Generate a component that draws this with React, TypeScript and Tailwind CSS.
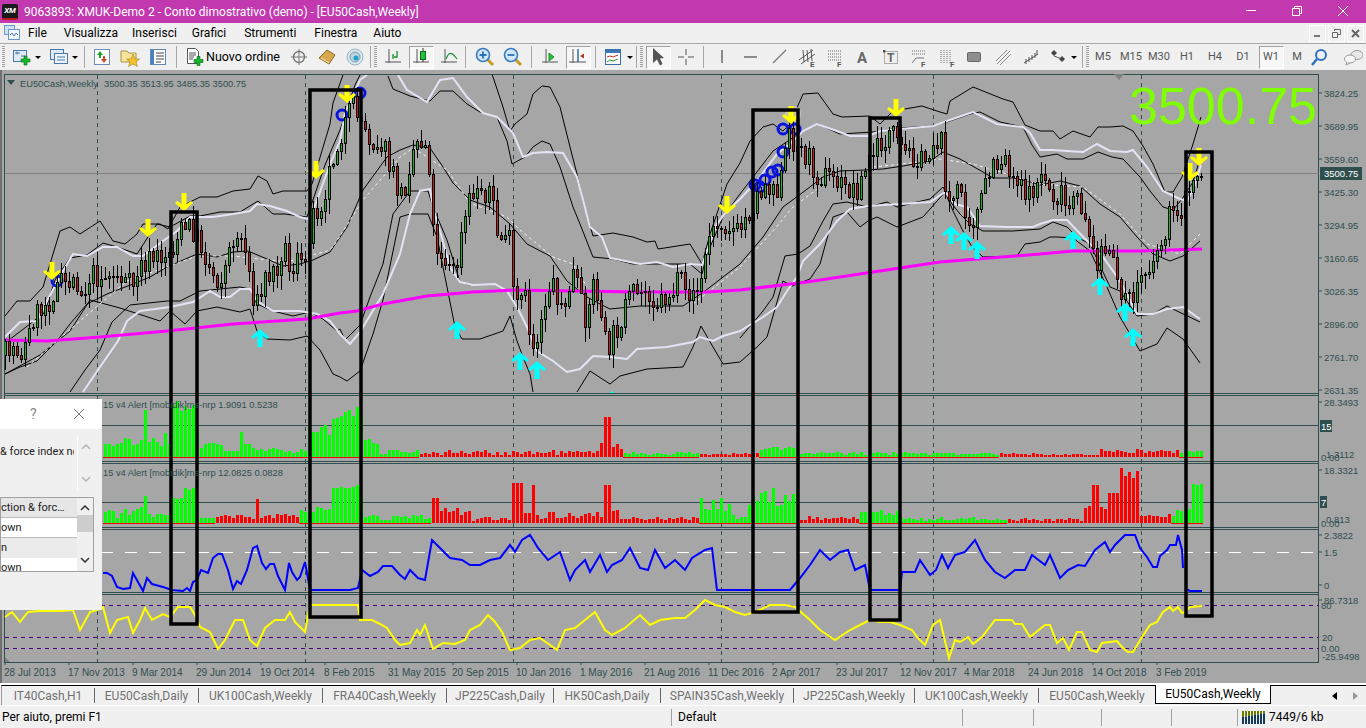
import React from 'react';

const SLATE = '#2f4f4f';

// ---- chart data, all in page pixels ----
const PRICE: number[][] = [[5,355],[17,345],[22,354],[30,340],[33,320],[50,300],[60,284],[80,280],[85,300],[90,274],[105,277],[118,274],[133,287],[142,267],[150,261],[163,256],[173,251],[182,231],[193,227],[202,244],[213,271],[220,281],[230,261],[233,237],[245,237],[248,257],[253,281],[257,307],[262,297],[267,277],[277,271],[285,241],[290,261],[293,274],[298,256],[305,274],[313,217],[325,197],[333,161],[345,127],[357,103],[365,127],[373,140],[385,143],[389,160],[397,183],[405,200],[409,170],[417,140],[428,143],[432,170],[433,220],[438,243],[447,260],[453,270],[457,274],[462,244],[469,207],[477,190],[485,190],[493,187],[497,227],[502,244],[505,231],[510,227],[513,274],[517,307],[522,300],[528,300],[533,350],[538,340],[545,307],[553,280],[562,300],[567,314],[573,274],[577,274],[582,304],[588,317],[593,290],[597,280],[602,314],[609,354],[613,340],[622,320],[627,307],[633,297],[642,294],[650,287],[657,304],[662,300],[673,294],[682,280],[687,297],[693,290],[702,290],[706,260],[710,237],[722,220],[730,224],[738,234],[745,224],[753,207],[762,190],[770,181],[782,187],[785,161],[790,141],[793,134],[798,147],[808,154],[822,177],[830,174],[845,187],[857,190],[865,177],[873,154],[883,145],[893,131],[898,147],[907,154],[917,154],[925,167],[930,151],[942,134],[945,167],[950,197],[953,204],[962,187],[967,204],[973,221],[982,207],[988,181],[998,164],[1009,154],[1013,177],[1022,174],[1030,201],[1037,184],[1045,174],[1057,201],[1062,194],[1069,214],[1077,201],[1089,214],[1093,254],[1097,260],[1105,247],[1113,264],[1121,281],[1129,304],[1133,304],[1137,287],[1145,274],[1153,259],[1162,247],[1165,234],[1169,221],[1177,204],[1182,214],[1189,194],[1193,187],[1197,174],[1201,173]];

const TOP_BLACK = '5,316 17,301 30,301 43,287 60,231 70,227 80,234 100,221 113,241 125,244 137,234 143,224 160,224 168,229 180,207 200,197 217,197 233,191 250,189 258,176 267,181 273,194 283,191 307,191 312,184 330,124 333,103 343,75';
const TOP_BLACK2 = '492,74 503,107 510,131 515,124 527,114 533,94 542,86 550,87 560,107 570,147 577,174 583,201 593,236 613,233 633,237 647,242 655,241 658,249 690,244 702,264 710,234 727,184 740,163 750,141 763,127 773,124 783,131 790,124 803,94 818,93 833,114 842,117 870,116 880,124 893,111 922,106 940,112 947,114 950,101 973,87 1003,99 1013,102 1025,125 1040,131 1053,131 1060,139 1073,131 1090,137 1098,127 1110,127 1123,126 1133,131 1143,146 1153,164 1165,192 1173,192 1182,177 1193,144 1201,117';
const WHITE_A = '5,337 20,322 37,321 47,301 63,271 73,254 87,256 103,247 117,247 133,256 143,256 163,241 177,231 190,217 213,217 233,214 250,211 257,204 270,206 287,211 300,217 308,219 313,211 330,164 340,141 345,113 360,80 367,75';
const WHITE_B = '398,75 407,90 427,102 440,80 453,78 467,97 483,113 497,117 513,133 523,157 533,153 547,152 563,153 577,177 590,227 602,237 610,258 630,262 640,264 657,262 673,267 690,264 702,265 707,251 717,224 727,211 740,199 757,181 777,154 790,144 803,131 817,124 837,131 850,136 868,136 880,131 900,129 933,126 947,121 973,112 997,124 1023,127 1030,133 1040,150 1053,150 1067,151 1083,152 1097,144 1110,151 1127,152 1133,150 1147,167 1163,191 1180,199 1187,201 1193,190 1201,165';
const BLACK_B = '5,343 30,324 45,312 55,280 70,258 87,255 103,243 117,247 137,254 148,237 157,224 170,227 190,216 200,216 220,212 240,212 258,201 273,214 285,214 307,217 325,165 340,130 355,85 360,75';
const BLACK_B2 = '388,76 393,89 410,96 430,101 440,91 453,91 467,104 480,112 497,117 507,141 512,164 525,157 533,147 542,141 550,144 560,167 573,207 580,224 593,257 613,259 633,264 655,264 690,264 702,274 707,254 723,217 740,194 773,151 803,131 818,124 840,134 873,132 900,128 930,126 947,122 970,114 980,112 1000,122 1023,127 1032,145 1040,157 1057,154 1067,159 1083,159 1098,152 1112,157 1123,159 1140,177 1150,191 1163,207 1173,210 1182,199 1193,182 1200,159';
const MIDDLE = '5,374 20,367 37,361 57,341 70,324 87,304 107,294 133,284 150,277 167,267 197,254 217,257 233,252 248,251 267,259 283,266 300,264 313,260 330,252 347,227 363,190 387,157 400,150 413,145 430,148 443,167 453,183 470,200 490,207 510,224 527,244 550,256 567,281 587,297 600,304 610,309 640,306 683,306 705,291 723,277 740,264 763,237 783,207 798,196 823,177 840,171 865,170 883,169 903,166 930,161 943,152 960,159 983,172 993,178 1013,178 1027,181 1040,185 1060,181 1080,186 1100,204 1120,217 1137,237 1153,254 1170,261 1183,256 1200,241';
const DOTTED = '27,367 80,321 127,281 197,256 233,256 287,262 327,251 333,247 363,200 400,157 413,148 447,170 470,203 507,217 520,230 553,257 573,264 587,287';
const DOTTED2 = '693,304 740,267 773,231 793,207 820,187';
const DOTTED3 = '873,167 903,164 940,159 973,164 1007,174 1037,184 1083,187 1120,214 1147,244 1180,254 1200,234';
const WHITE_C = '83,392 100,367 118,341 127,321 140,311 170,307 193,302 210,291 220,297 230,297 240,289 250,289 257,301 273,311 300,311 317,314 330,321 340,334 350,344 360,332 383,294 400,254 410,214 420,191 430,189 433,207 440,231 450,267 460,282 473,285 495,284 507,291 517,307 527,327 537,351 553,361 567,372 580,369 593,356 610,357 627,359 637,349 667,347 693,342 700,337 713,341 723,336 740,331 763,317 777,307 787,291 797,277 803,261 820,244 837,221 850,209 868,206 900,204 930,202 945,192 955,204 967,207 980,226 1007,227 1033,227 1040,224 1053,220 1067,220 1090,244 1103,257 1120,281 1137,314 1153,314 1167,309 1183,307 1200,319';
const BLACK_C = '70,392 85,370 100,350 112,322 130,305 167,301 180,301 200,291 240,287 250,289 257,304 273,311 293,316 310,312 323,319 337,331 340,329 345,340 360,325 370,297 383,264 393,214 410,191 428,191 433,207 447,240 460,282 470,285';
const BLACK_C2 = '740,338 763,311 773,297 785,256 798,254 810,246 823,221 833,204 847,202 868,207 887,202 897,207 917,202 930,199 943,187 952,204 960,214 970,224 983,231 1013,231 1040,229 1053,222 1067,227 1077,237 1090,244 1110,287 1120,291 1137,316 1153,314 1167,306 1177,311 1200,322';
const BLACK_D = '5,374 40,355 70,331 90,300 120,308 160,321 170,311 185,324 197,311 217,307 240,312 250,309 257,331 267,339 290,340 307,336 320,350 333,374 340,377 347,381 360,371 373,334 383,300 400,217 410,214 428,214 437,237 447,287 455,327 462,339 480,339 503,331 510,316 517,341 523,357 530,374 533,392';
const BLACK_D2 = '577,392 590,371 610,384 620,376 647,369 683,367 693,347 701,326 713,347 723,364 740,362 757,347 767,337 783,281 792,286 810,279 820,264 833,217 847,212 860,227 868,221 877,217 897,227 923,217 945,192 953,211 963,231 972,247 983,257 1017,256 1025,244 1040,242 1050,237 1057,237 1073,238 1090,251 1107,287 1120,317 1140,351 1157,344 1167,328 1183,339 1200,363';
const PINK = '5,340 47,341 100,337 167,331 233,324 307,319 340,313 357,311 383,304 427,296 473,292 513,290 573,291 640,292 707,292 740,290 807,282 873,272 940,262 1040,254 1073,251 1140,251 1202,249';
const BLUE_LINE = '103,573 107,573 112,576 117,587 123,589 130,588 133,573 138,582 143,591 147,578 152,584 163,587 172,590 183,591 187,588 190,591 193,582 197,580 201,570 208,573 213,558 218,554 222,554 228,570 233,589 237,581 241,584 247,570 253,548 257,546 262,563 266,569 270,564 274,564 278,576 285,590 289,563 292,572 297,580 300,577 305,562 310,590 350,590 358,588 362,570 370,576 378,572 383,566 392,566 400,575 405,579 410,570 418,578 425,580 432,540 440,548 450,558 462,560 470,565 480,565 490,560 500,558 510,545 515,552 522,540 530,535 538,548 548,560 560,552 570,580 575,570 585,560 590,572 600,555 607,572 612,565 622,560 630,548 640,568 648,570 655,550 665,568 675,560 685,570 692,558 705,550 712,548 717,590 750,590 790,590 800,578 810,565 820,550 830,560 840,552 848,550 855,570 865,565 870,590 900,590 902,572 915,572 920,560 930,575 936,570 942,555 948,568 955,555 965,552 975,540 985,560 995,572 1005,578 1015,570 1025,570 1032,555 1045,565 1050,555 1060,578 1068,570 1078,565 1085,566 1095,550 1105,542 1110,552 1115,545 1125,535 1135,535 1140,548 1147,557 1153,567 1157,567 1160,556 1167,550 1170,545 1176,545 1178,535 1182,550 1183,568';
const BLUE_TAIL = '1186,589 1190,591 1202,591';
const YELLOW_LINE = '5,617 12,612 20,622 28,612 40,611 62,611 73,610 80,630 90,612 97,610 103,607 110,633 117,620 128,617 133,633 140,620 145,608 152,620 163,614 170,617 178,607 190,607 195,615 200,627 210,632 218,649 225,640 235,620 243,620 250,640 257,646 265,628 275,620 285,620 290,612 295,622 305,632 310,605 358,605 360,620 372,620 380,624 387,628 395,640 400,645 410,643 417,630 420,635 425,625 433,649 443,643 455,644 465,640 470,630 480,625 488,615 495,622 502,632 510,650 520,648 530,640 540,638 550,645 557,650 565,630 575,628 585,620 595,612 605,630 612,635 625,628 640,615 650,625 660,620 675,618 685,618 695,610 705,600 715,605 725,607 735,612 745,615 755,612 770,605 785,605 795,607 810,620 820,630 835,640 850,630 860,625 870,620 880,622 890,622 900,625 912,630 918,638 925,645 933,625 940,620 949,658 955,640 960,642 968,637 973,644 982,637 995,620 1012,620 1015,624 1022,624 1030,637 1035,633 1045,625 1050,625 1057,643 1063,638 1069,650 1077,632 1082,632 1090,650 1097,652 1102,643 1110,642 1117,641 1122,647 1128,652 1133,652 1142,637 1150,625 1157,622 1163,612 1170,607 1173,611 1178,607 1182,613 1185,612 1190,607 1202,606';

const BOXES = [[171,197,212,624],[310,361,90,617],[753,798,110,612],[870,900,118,620],[1186,1212,152,616]];
const VGRID = [97,305,513,721,933,1141];
const YELLOW_ARROWS = [[52,280],[148,237],[184,211],[316,179],[347,103],[727,214],[791,124],[896,117],[1190,181],[1199,166]];
const CYAN_ARROWS = [[260,329],[457,321],[520,352],[537,361],[612,391],[951,226],[964,232],[977,241],[1073,231],[1100,277],[1125,303],[1133,328]];
const RINGS = [[57,281],[342,115],[360,93],[783,129],[795,129],[783,152],[755,185],[760,187],[765,180],[772,172],[778,170]];

const AXIS = [['3824.25',97],['3689.95',130],['3559.60',163],['3425.30',196],['3294.95',229],['3160.65',262],['3026.35',295],['2896.00',328],['2761.70',361],['2631.35',394],['28.3493',406],['18.3321',474],['2.3822',539],['1.5',556],['0',589],['86.7318',604]] as [string, number][];
const DATES = ['28 Jul 2013','17 Nov 2013','9 Mar 2014','29 Jun 2014','19 Oct 2014','8 Feb 2015','31 May 2015','20 Sep 2015','10 Jan 2016','1 May 2016','21 Aug 2016','11 Dec 2016','2 Apr 2017','23 Jul 2017','12 Nov 2017','4 Mar 2018','24 Jun 2018','14 Oct 2018','3 Feb 2019'];

const rng = (seed: number) => () => {
  seed = (seed + 0x6d2b79f5) | 0;
  let t = Math.imul(seed ^ (seed >>> 15), 1 | seed);
  t = (t + Math.imul(t ^ (t >>> 7), 61 | t)) ^ t;
  return ((t ^ (t >>> 14)) >>> 0) / 4294967296;
};

const priceAt = (x: number) => {
  for (let i = 1; i < PRICE.length; i++) {
    if (x <= PRICE[i][0]) {
      const [x0, y0] = PRICE[i - 1];
      const [x1, y1] = PRICE[i];
      return y0 + ((y1 - y0) * (x - x0)) / (x1 - x0);
    }
  }
  return 173;
};

function Candles() {
  const r = rng(7);
  let prev = priceAt(5);
  const out = [];
  for (let x = 5; x <= 1201; x += 4) {
    const c = Math.round(priceAt(x + 2) + (r() - 0.5) * 26);
    const o = Math.round(prev);
    prev = c;
    const top = Math.min(o, c);
    const bot = Math.max(o, c);
    const hi = top - Math.round(r() * 12) - 1;
    const lo = bot + Math.round(r() * 14) + 1;
    out.push(
      <g key={x}>
        <line x1={x + 0.5} x2={x + 0.5} y1={hi} y2={lo} stroke="#000" />
        <rect x={x - 0.5} y={top + 0.5} width={2} height={Math.max(bot - top, 1)} fill={c < o ? '#10c010' : '#d01818'} stroke="#000" />
      </g>,
    );
  }
  return <g shapeRendering="crispEdges">{out}</g>;
}

// [from x, to x, min height, max height, colour]
type Seg = [number, number, number, number, 'g' | 'r'];
const BARS1: Seg[] = [[100,142,8,20,'g'],[143,147,47,47,'g'],[148,172,10,25,'g'],[173,194,45,58,'g'],[195,198,27,27,'g'],[199,222,8,15,'g'],[223,238,5,8,'g'],[239,243,25,25,'g'],[244,252,10,17,'g'],[253,308,4,9,'g'],[309,330,22,34,'g'],[331,362,38,50,'g'],[363,380,12,18,'g'],[381,420,3,8,'g'],[421,600,2,7,'r'],[601,604,14,14,'r'],[605,609,40,40,'r'],[610,622,8,15,'r'],[623,700,2,5,'g'],[701,760,2,4,'r'],[761,800,6,11,'g'],[801,1000,2,5,'g'],[1001,1100,2,4,'r'],[1101,1180,3,8,'r'],[1181,1204,4,6,'g']];
const BARS2: Seg[] = [[100,142,5,16,'g'],[143,147,27,27,'g'],[148,172,5,10,'g'],[173,181,24,28,'g'],[182,194,32,36,'g'],[195,198,20,20,'g'],[199,214,3,6,'g'],[215,254,3,9,'r'],[255,259,24,24,'r'],[260,300,4,9,'r'],[301,330,10,20,'g'],[331,362,25,38,'g'],[363,430,3,8,'g'],[431,437,25,25,'r'],[438,470,8,16,'r'],[471,512,2,6,'r'],[513,524,40,40,'r'],[525,529,10,10,'r'],[530,534,38,38,'r'],[535,604,4,11,'r'],[605,609,38,38,'r'],[610,618,10,16,'r'],[619,700,3,6,'r'],[701,732,12,25,'g'],[733,748,4,8,'g'],[749,800,14,36,'g'],[801,858,3,7,'r'],[859,900,6,15,'g'],[901,1005,2,6,'g'],[1006,1082,2,5,'r'],[1083,1091,10,20,'r'],[1092,1098,38,38,'r'],[1099,1108,8,16,'r'],[1109,1117,30,30,'r'],[1118,1137,45,56,'r'],[1138,1172,4,9,'r'],[1173,1190,6,14,'g'],[1191,1204,38,40,'g']];

function Bars({ segs, base, seed }: { segs: Seg[]; base: number; seed: number }) {
  const r = rng(seed);
  const out = [];
  for (let x = 105; x <= 1203; x += 4) {
    const s = segs.find((g) => x >= g[0] && x <= g[1]);
    if (!s) continue;
    const h = Math.round(s[2] + r() * (s[3] - s[2]));
    const fill = s[4] === 'g' ? '#00ff00' : '#ff0000';
    out.push(<rect key={x} x={x - 1} y={base - h} width={3} height={h} fill={fill} />);
    if (s[4] === 'g') out.push(<rect key={'u' + x} x={x - 2} y={base} width={4} height={1} fill="#ff0000" />);
  }
  return <g shapeRendering="crispEdges">{out}</g>;
}

const Down = ({ x, y }: { x: number; y: number }) => (
  <polygon transform={`translate(${x} ${y})`} fill="#ffff00" points="-2.5,-18 2.5,-18 2.5,-7 7,-10 9,-8 0,0 -9,-8 -7,-10 -2.5,-7" />
);
const Up = ({ x, y }: { x: number; y: number }) => (
  <polygon transform={`translate(${x} ${y})`} fill="#00ffff" points="-2.5,18 2.5,18 2.5,7 7,10 9,8 0,0 -9,8 -7,10 -2.5,7" />
);

function ChartDrawing() {
  return (
    <svg viewBox="0 70 1366 613" className="absolute inset-0 w-[1366px] h-[613px] font-['Liberation_Sans',sans-serif]">
      <defs>
        <clipPath id="mainWindow"><rect x="5" y="75" width="1314" height="318" /></clipPath>
      </defs>
      {/* frame and separators */}
      <rect x="4.5" y="74.5" width="1314" height="588" fill="none" stroke={SLATE} />
      {[393.5,395.5,461.5,463.5,527.5,529.5,592.5,594.5].map((y) => (
        <line key={y} x1="5" x2="1319" y1={y} y2={y} stroke={SLATE} />
      ))}
      <line x1="1" x2="1" y1="70" y2="683" stroke="#6f6f6f" strokeWidth="2" />
      {VGRID.map((x) => (
        <line key={x} x1={x + 0.5} x2={x + 0.5} y1="75" y2="662" stroke={SLATE} strokeDasharray="4 4" />
      ))}
      <line x1="5" x2="1319" y1="173.5" y2="173.5" stroke="#808080" />
      <line x1="5" x2="1319" y1="425.5" y2="425.5" stroke={SLATE} />
      <line x1="5" x2="1319" y1="502.5" y2="502.5" stroke={SLATE} />
      <line x1="5" x2="1319" y1="552.5" y2="552.5" stroke="#fff" strokeDasharray="12 12" />
      {[605.5,637.5,648.5].map((y) => (
        <line key={y} x1="5" x2="1319" y1={y} y2={y} stroke="#4b0082" strokeDasharray="4 4" />
      ))}

      <g clipPath="url(#mainWindow)">
        {/* bollinger bands behind candles */}
        <g fill="none" stroke="#000" strokeWidth="1">
          {[TOP_BLACK, TOP_BLACK2, BLACK_B, BLACK_B2, MIDDLE, BLACK_C, BLACK_C2, BLACK_D, BLACK_D2].map((p) => (
            <polyline key={p.slice(0, 12)} points={p} />
          ))}
        </g>
        <g fill="none" stroke="#e3e3f5" strokeWidth="2">
          {[WHITE_A, WHITE_B, WHITE_C].map((p) => (
            <polyline key={p.slice(0, 12)} points={p} />
          ))}
        </g>
        <g fill="none" stroke="#f2f2f2" strokeDasharray="3 3">
          {[DOTTED, DOTTED2, DOTTED3].map((p) => (
            <polyline key={p.slice(0, 12)} points={p} />
          ))}
        </g>
        <polyline points={PINK} fill="none" stroke="#ff00ff" strokeWidth="3" />
        {RINGS.map(([x, y]) => (
          <circle key={x + '-' + y} cx={x} cy={y} r="5" fill="none" stroke="#0a14e0" strokeWidth="3" />
        ))}
        <circle cx="793" cy="114" r="8" fill="#c9c3b4" />
        <Candles />
        {YELLOW_ARROWS.map(([x, y]) => <Down key={x} x={x} y={y} />)}
        {CYAN_ARROWS.map(([x, y]) => <Up key={x} x={x} y={y} />)}
      </g>

      {/* indicator windows */}
      <Bars segs={BARS1} base={457} seed={21} />
      <Bars segs={BARS2} base={523} seed={33} />
      <polyline points={BLUE_LINE} fill="none" stroke="#0000ff" strokeWidth="2" />
      <polyline points={BLUE_TAIL} fill="none" stroke="#0000ff" strokeWidth="2" />
      <polyline points={YELLOW_LINE} fill="none" stroke="#ffff00" strokeWidth="2" />

      {/* hand drawn boxes from the screenshot */}
      {BOXES.map(([l, r, t, b]) => (
        <rect key={l} x={l} y={t} width={r - l} height={b - t} fill="none" stroke="#000" strokeWidth="3.5" />
      ))}

      {/* labels */}
      <polygon points="7,80 15,80 11,85" fill={SLATE} />
      <polygon points="1114,74 1124,74 1119,80" fill="#808080" />
      <polygon points="5,657 5,662 10,662" fill="#808080" />
      <text x="20" y="87" className="text-[9.3px]" fill={SLATE}>EU50Cash,Weekly</text>
      <text x="104" y="87" className="text-[9.3px]" fill={SLATE}>3500.35 3513.95 3485.35 3500.75</text>
      <text x="103" y="408" className="text-[9.3px]" fill={SLATE}>15 v4 Alert [mobidik]ms-nrp 1.9091 0.5238</text>
      <text x="103" y="476" className="text-[9.3px]" fill={SLATE}>15 v4 Alert [mobidik]ms-nrp 12.0825 0.0828</text>
      <text x="1129" y="124" fill="#7fff00" className="text-[52px]">3500.75</text>

      {AXIS.map(([t, y]) => (
        <g key={t}>
          <line x1="1319" x2="1322" y1={y - 4} y2={y - 4} stroke={SLATE} />
          <text x="1324" y={y} className="text-[9.5px]" fill={SLATE}>{t}</text>
        </g>
      ))}
      <text x="1321" y="461" className="text-[9.5px]" fill={SLATE}>0.00</text>
      <text x="1326" y="458" className="text-[9.5px]" fill={SLATE}>1.3112</text>
      <text x="1321" y="527" className="text-[9.5px]" fill={SLATE}>0.00</text>
      <text x="1326" y="523" className="text-[9.5px]" fill={SLATE}>0.813</text>
      <text x="1321" y="609" className="text-[9.5px]" fill={SLATE}>80</text>
      <text x="1322" y="641" className="text-[9.5px]" fill={SLATE}>20</text>
      <text x="1321" y="652" className="text-[9.5px]" fill={SLATE}>0.00</text>
      <text x="1322" y="660" className="text-[9.5px]" fill={SLATE}>-25.9498</text>
      <rect x="1320" y="167" width="42" height="13" fill={SLATE} />
      <text x="1324" y="177" className="text-[9.5px]" fill="#fff">3500.75</text>
      <rect x="1320" y="420" width="12" height="12" fill={SLATE} />
      <text x="1321" y="430" className="text-[9.5px]" fill="#fff">15</text>
      <rect x="1320" y="496" width="7" height="12" fill={SLATE} />
      <text x="1321" y="506" className="text-[9.5px]" fill="#fff">7</text>

      {DATES.map((d, i) => (
        <g key={d}>
          <line x1={5 + 64 * i} x2={5 + 64 * i} y1="662" y2="665" stroke={SLATE} />
          <text x={4 + 64 * i} y="676" className="text-[10px]" fill={SLATE}>{d}</text>
        </g>
      ))}
    </svg>
  );
}

// ---- toolbar icons ----
const Ico = ({ children, w = 20 }: { children: React.ReactNode; w?: number }) => (
  <svg width={w} height="20" viewBox={`0 0 ${w} 20`} className="shrink-0">{children}</svg>
);
const Plus = ({ x, y }: { x: number; y: number }) => (
  <path transform={`translate(${x} ${y})`} d="M3 0h3v3h3v3H6v3H3V6H0V3h3z" fill="#12b82a" stroke="#0a6a18" strokeWidth="0.6" />
);
const Axes = () => <path d="M6 2v14M2 15h16" stroke="#555" fill="none" />;

const icons: Record<string, React.ReactNode> = {
  newChart: <><rect x="1.5" y="3.5" width="13" height="11" fill="#dfeaf7" stroke="#4a78ad" /><path d="M3 6h5M5 4.5v3M9 9h4" stroke="#4a78ad" /><Plus x={9} y={9} /></>,
  profiles: <><rect x="1.5" y="2.5" width="13" height="10" fill="#dfeaf7" stroke="#4a78ad" /><rect x="5.5" y="6.5" width="13" height="10" fill="#eef4fb" stroke="#4a78ad" /><path d="M8 10h8M8 13h8" stroke="#4a78ad" /></>,
  market: <><rect x="2.5" y="2.5" width="15" height="15" fill="#fff" stroke="#6b8fb8" /><path d="M8 4l3 4H9v3H7V8H5z" fill="#1aa52a" /><path d="M12 16l-3-4h2V9h2v3h2z" fill="#d8452a" /></>,
  nav: <><path d="M1 4h6l2 2h7v9H1z" fill="#f7e39a" stroke="#a89448" /><polygon points="13,7 15,12 19.5,12 16,15 17.5,19.5 13,17 8.5,19.5 10,15 6.5,12 11,12" fill="#f2c230" stroke="#a5801a" strokeWidth="0.6" /></>,
  term: <><rect x="2.5" y="2.5" width="15" height="15" fill="#fff" stroke="#5b86b5" /><rect x="3" y="3" width="3" height="14" fill="#4a7fc0" /><path d="M8 6h8M8 9h8M8 12h8M8 15h5" stroke="#444" /></>,
  order: <><path d="M2.5 1.5h8l3 3v12h-11z" fill="#fff" stroke="#555" /><path d="M4 6h7M4 8h7M4 10h5M4 12h4" stroke="#555" /><Plus x={9} y={9.5} /></>,
  target: <><circle cx="10" cy="10" r="5.5" fill="none" stroke="#777" strokeWidth="1.4" /><path d="M10 2v16M2 10h16" stroke="#777" /></>,
  book: <><polygon points="2,11 10,3 18,8 12,17" fill="#d9a94e" stroke="#8a6420" /><path d="M4 11l8 5" stroke="#fff2c8" /></>,
  radio: <><circle cx="10" cy="10" r="8" fill="#d8e6ee" stroke="#9db5c4" /><circle cx="10" cy="10" r="5" fill="#bcd3df" stroke="#7fa0b4" /><circle cx="11" cy="11" r="2.5" fill="#1fa0c8" /></>,
  bars: <><Axes /><path d="M10 12V8h1M14 4v6h-3" stroke="#17902a" fill="none" strokeWidth="1.3" /></>,
  candle: <><Axes /><path d="M12 1v14" stroke="#333" /><rect x="9.5" y="4.5" width="5" height="8" fill="#27c23a" stroke="#0e6a1c" /></>,
  line: <><Axes /><path d="M7 12c3-8 6-7 11 0" stroke="#17902a" fill="none" strokeWidth="1.2" /></>,
  zoomIn: <><path d="M12 12l6 6" stroke="#c79a21" strokeWidth="3" /><circle cx="8" cy="8" r="6.5" fill="#cfe6fb" stroke="#3c7dc0" strokeWidth="1.6" /><path d="M4.5 8h7M8 4.5v7" stroke="#2c6fb5" strokeWidth="1.8" /></>,
  zoomOut: <><path d="M12 12l6 6" stroke="#c79a21" strokeWidth="3" /><circle cx="8" cy="8" r="6.5" fill="#cfe6fb" stroke="#3c7dc0" strokeWidth="1.6" /><path d="M4.5 8h7" stroke="#2c6fb5" strokeWidth="1.8" /></>,
  scroll: <><Axes /><polygon points="9,6 14,10 9,14" fill="#27c23a" stroke="#17902a" /></>,
  shift: <><path d="M5 2v14M1 15h17" stroke="#555" /><path d="M10 2v13" stroke="#2a6db0" strokeWidth="1.5" /><polygon points="12,9 16,6.5 16,11.5" fill="#b5381c" /></>,
  template: <><rect x="1.5" y="2.5" width="15" height="15" fill="#fff" stroke="#3a6ea5" /><rect x="2" y="3" width="14" height="3" fill="#3a78b8" /><path d="M3 10l3-1 3 1 5-2" stroke="#b5381c" fill="none" /><path d="M3 15l3-2 3 1 5-2" stroke="#2a9a30" fill="none" /></>,
  cursor: <polygon points="5,1 5,16 9,12.5 12,18.5 14.5,17 12,11.5 16,11" fill="#555" />,
  cross: <path d="M10 2v6M10 12v6M2 10h6M12 10h6" stroke="#555" />,
  vline: <path d="M10 3v13" stroke="#555" strokeWidth="1.3" />,
  hline: <path d="M3 10h13" stroke="#555" strokeWidth="1.3" />,
  trend: <path d="M4 16L17 3" stroke="#777" strokeWidth="1.3" />,
  channel: <><path d="M2 13L16 3M4 17L18 7M6 3l1 12M10 3l1 12M14 2l1 12" stroke="#555" fill="none" /><text x="13" y="19.5" className="text-[8px] font-bold" fill="#555">E</text></>,
  fiboH: <><path d="M3 4h13M3 7h13M3 10h13M3 13h13" stroke="#666" strokeDasharray="1 1" /><text x="12" y="19.5" className="text-[8px] font-bold" fill="#555">F</text></>,
  textA: <text x="4" y="16" className="text-[15px] font-bold" fill="#666">A</text>,
  label: <><rect x="3.5" y="4.5" width="13" height="12" fill="none" stroke="#666" strokeDasharray="1 1" /><rect x="2" y="3" width="2.5" height="2.5" fill="#555" /><text x="6" y="15" className="text-[12px] font-bold" fill="#666">T</text></>,
  fiboArc: <><path d="M3 4h14M3 7h14" stroke="#666" strokeDasharray="1 1" /><path d="M3 16l4-5 8 0" stroke="#777" fill="none" /><text x="12" y="19.5" className="text-[8px] font-bold" fill="#555">F</text></>,
  fiboV: <><path d="M4 3v13M7 3v13M10 3v13M13 3v13" stroke="#666" strokeDasharray="1 1" /><text x="13" y="19.5" className="text-[8px] font-bold" fill="#555">F</text></>,
  rect: <rect x="2.5" y="5.5" width="13" height="9" rx="1" fill="#8e8e8e" stroke="#666" />,
  lines: <path d="M3 14L14 3M4 17L17 4M7 18L18 7" stroke="#888" fill="none" />,
  gitter: <path d="M3 16l14-9M5 12v5M8 10v5M11 8v5M14 6v5M16 3v5" stroke="#555" fill="none" />,
  arrows: <><polygon points="6,3 9,6 6,9 3,6" fill="#444" /><polygon points="11,12 14,9 17,12 14,15" fill="#444" /><path d="M6 9l8 3" stroke="#555" /></>,
  search: <><circle cx="12" cy="8" r="5" fill="none" stroke="#2f6fc4" strokeWidth="2" /><path d="M8 12l-5 6" stroke="#2f6fc4" strokeWidth="2.5" /></>,
  chat: <><ellipse cx="14" cy="8" rx="6" ry="4.5" fill="#e8e8e8" stroke="#9a9a9a" /><ellipse cx="7" cy="12" rx="5.5" ry="4" fill="#f7f7f7" stroke="#9a9a9a" /><path d="M4 15l-1 3 4-2" fill="#f7f7f7" stroke="#9a9a9a" /></>,
};

const Drop = () => <span className="ml-[3px] w-0 h-0 border-x-[3px] border-x-transparent border-t-[3px] border-t-black shrink-0" />;

function Btn({ name, active, drop, className }: { name: string; active?: boolean; drop?: boolean; className?: string }) {
  const base = 'h-[24px] flex items-center justify-center shrink-0 ' + (className ?? 'w-[28px]');
  return (
    <div className={base}>
      {active ? (
        <div className="w-[25px] h-[23px] flex items-center justify-center border border-t-[#a0a0a0] border-l-[#a0a0a0] border-b-white border-r-white bg-[#f7f7f7]">
          <Ico>{icons[name]}</Ico>
        </div>
      ) : (
        <Ico>{icons[name]}</Ico>
      )}
      {drop && <Drop />}
    </div>
  );
}

const Sep = ({ className }: { className: string }) => <div className={'w-px h-[22px] bg-[#a8a8a8] shrink-0 ' + className} />;
const Grip = ({ className }: { className: string }) => (
  <div className={'w-[3px] h-[22px] shrink-0 bg-[repeating-linear-gradient(to_bottom,#a0a0a0_0_1px,transparent_1px_2px)] ' + className} />
);
const Tf = ({ t, active, w }: { t: string; active?: boolean; w?: string }) => (
  <div className={'h-[24px] flex items-center justify-center shrink-0 ' + (w ?? 'w-[28px]')}>
    <span className={'h-[23px] flex items-center justify-center text-[11px] text-[#555] ' + (active ? 'w-[25px] border border-t-[#a0a0a0] border-l-[#a0a0a0] border-b-white border-r-white bg-[#f7f7f7]' : '')}>{t}</span>
  </div>
);

function Toolbar() {
  return (
    <div className="h-[27px] bg-[#f0f0f0] flex items-center border-t border-t-[#a9a9a9] overflow-hidden shrink-0">
      <Grip className="ml-[2px]" />
      <Btn name="newChart" drop className="w-[32px] ml-[5px]" />
      <Btn name="profiles" drop className="w-[32px] ml-[5px]" />
      <Sep className="ml-[5px]" />
      <Btn name="market" className="w-[28px] ml-[3px]" />
      <Btn name="nav" />
      <Btn name="term" />
      <Sep className="ml-[4px]" />
      <div className="ml-[8px] w-[100px] flex items-center shrink-0 text-[12.5px] text-black">
        <Ico>{icons.order}</Ico>
        <span className="ml-[1px] whitespace-nowrap">Nuovo ordine</span>
      </div>
      <Btn name="target" />
      <Btn name="book" />
      <Btn name="radio" />
      <Sep className="ml-px" />
      <Grip className="ml-[3px]" />
      <Btn name="bars" className="w-[28px] ml-[2px]" />
      <Btn name="candle" active />
      <Btn name="line" />
      <Sep className="ml-[2px]" />
      <Btn name="zoomIn" className="w-[28px] ml-[5px]" />
      <Btn name="zoomOut" />
      <Sep className="ml-[4px]" />
      <Btn name="scroll" className="w-[28px] ml-[4px]" />
      <Btn name="shift" active />
      <Sep className="ml-[3px]" />
      <Btn name="template" drop className="w-[35px] ml-[5px]" />
      <Sep className="ml-0" />
      <Grip className="ml-[3px]" />
      <Btn name="cursor" active className="w-[28px] ml-[1px]" />
      <Btn name="cross" />
      <Sep className="ml-[3px]" />
      <Btn name="vline" className="w-[28px] ml-[4px]" />
      <Btn name="hline" className="w-[28px] ml-[1px]" />
      <Btn name="trend" />
      <Btn name="channel" />
      <Btn name="fiboH" />
      <Btn name="textA" />
      <Btn name="label" />
      <Btn name="fiboArc" />
      <Btn name="fiboV" />
      <Btn name="rect" />
      <Btn name="lines" />
      <Btn name="gitter" />
      <Btn name="arrows" drop className="w-[34px]" />
      <Sep className="ml-[3px]" />
      <Grip className="ml-[3px]" />
      <div className="flex">
        <Tf t="M5" /><Tf t="M15" /><Tf t="M30" /><Tf t="H1" /><Tf t="H4" /><Tf t="D1" /><Tf t="W1" active /><Tf t="M" w="w-[24px]" />
      </div>
      <Btn name="search" className="w-[18px] ml-px" />
      <Btn name="chat" className="w-[24px] ml-[13px]" />
    </div>
  );
}

function Dialog() {
  return (
    <div className="absolute left-0 top-[329px] w-[102px] h-[211px] bg-[#f0f0f0] text-[11px] text-[#222] overflow-hidden flex flex-col">
      <div className="h-[30px] bg-white flex items-center text-[#8a8a8a] shrink-0">
        <span className="ml-[30px] text-[14px]">?</span>
        <svg width="12" height="12" viewBox="0 0 12 12" className="ml-[36px]"><path d="M1 1l10 10M11 1L1 11" stroke="#777" /></svg>
      </div>
      <div className="h-[68px] flex shrink-0">
        <div className="w-[74px] overflow-hidden whitespace-nowrap pt-[15px]">&amp; force index nc</div>
        <div className="ml-[3px] w-[17px] my-[7px] border-l border-l-white flex flex-col items-center justify-between py-[8px] text-[#b5b5b5]">
          <svg width="10" height="6" viewBox="0 0 10 6"><path d="M1 5l4-4 4 4" fill="none" stroke="currentColor" strokeWidth="1.5" /></svg>
          <svg width="10" height="6" viewBox="0 0 10 6"><path d="M1 1l4 4 4-4" fill="none" stroke="currentColor" strokeWidth="1.5" /></svg>
        </div>
      </div>
      <div className="w-[94px] h-[75px] border border-[#a0a0a0] flex overflow-hidden">
        <div className="w-[76px] shrink-0 whitespace-nowrap overflow-hidden">
          <div className="h-[20px] bg-[#e6e6e6] border-b border-b-[#bbb] leading-[20px]">ction &amp; forc…</div>
          <div className="h-[20px] bg-white border-b border-b-[#bbb] leading-[20px]">own</div>
          <div className="h-[20px] bg-[#ebebeb] leading-[20px]">n</div>
          <div className="h-[20px] bg-white leading-[20px]">own</div>
        </div>
        <div className="flex-1 flex flex-col items-center text-[#333] bg-[#f0f0f0]">
          <svg width="10" height="6" viewBox="0 0 10 6" className="mt-[7px]"><path d="M1 5l4-4 4 4" fill="none" stroke="currentColor" strokeWidth="1.5" /></svg>
          <div className="w-full h-[17px] bg-[#cdcdcd] mt-[4px]" />
          <svg width="10" height="6" viewBox="0 0 10 6" className="mt-[25px]"><path d="M1 1l4 4 4-4" fill="none" stroke="currentColor" strokeWidth="1.5" /></svg>
        </div>
      </div>
    </div>
  );
}

const TABS: [string, string][] = [
  ['IT40Cash,H1', 'w-[93px]'],['EU50Cash,Daily', 'w-[104px]'],['UK100Cash,Weekly', 'w-[124px]'],['FRA40Cash,Weekly', 'w-[124px]'],['JP225Cash,Daily', 'w-[107px]'],['HK50Cash,Daily', 'w-[107px]'],['SPAIN35Cash,Weekly', 'w-[133px]'],['JP225Cash,Weekly', 'w-[121px]'],['UK100Cash,Weekly', 'w-[124px]'],
];

function Tabs() {
  return (
    <div className="h-[20px] shrink-0 bg-[#f0f0f0] flex items-stretch border-t border-t-black text-[12px] text-[#707070] ml-[1px] border-l border-l-[#999] relative">
      {TABS.map(([t, w], i) => (
        <div key={i} className={'flex items-center justify-center border-r border-r-[#666] my-[2px] shrink-0 ' + w}>{t}</div>
      ))}
      <div className="w-[116px] flex items-center justify-center shrink-0">EU50Cash,Weekly</div>
      <div className="w-[116px] flex items-center justify-center shrink-0 bg-white border-x border-b border-black text-black h-[19px] -mt-px relative">EU50Cash,Weekly</div>
      <span className="ml-auto w-0 h-0 self-center border-y-[4px] border-y-transparent border-r-[5px] border-r-black mr-[16px]" />
      <span className="w-0 h-0 self-center border-y-[4px] border-y-transparent border-l-[5px] border-l-[#999] mr-[8px]" />
    </div>
  );
}

function Status() {
  const Cell = ({ w, text }: { w: string; text?: string }) => (
    <div className={'h-[17px] border-l border-l-[#a0a0a0] flex items-center pl-[6px] text-[12px] text-black shrink-0 ' + w}>{text}</div>
  );
  return (
    <div className="h-[23px] shrink-0 bg-[#f0f0f0] flex items-center border-t border-t-white">
      <div className="w-[671px] pl-[2px] text-[12px] text-black shrink-0">Per aiuto, premi F1</div>
      <Cell w="w-[291px]" text="Default" />
      <Cell w="w-[71px]" />
      <Cell w="w-[68px]" />
      <Cell w="w-[70px]" />
      <Cell w="w-[66px]" />
      <div className="h-[17px] border-l border-l-[#a0a0a0] flex items-center pl-[4px] text-[12px] text-black shrink-0 whitespace-nowrap">
        <svg width="23" height="13" viewBox="0 0 23 13" className="mr-[4px]">
          {[0,3,6,9,12,15,18,21].map((x, i) => (
            <g key={x}>
              <rect x={x} y="0" width="2" height={6 - i * 0.5} fill="#6b7a00" />
              <rect x={x} y={6 - i * 0.5} width="2" height={7 + i * 0.5} fill="#163a5a" />
            </g>
          ))}
        </svg>
        7449/6 kb
      </div>
    </div>
  );
}

export default function App() {
  return (
    <div className="w-[1366px] h-[728px] overflow-hidden flex flex-col bg-[#f0f0f0] font-['Roboto',sans-serif]">
      {/* title bar */}
      <div className="h-[23px] bg-[#c238af] flex items-center text-white shrink-0">
        <div className="ml-[2px] w-[16px] h-[16px] rounded-[2px] bg-[#1a1a1a] flex items-center justify-center text-[8px] leading-none font-bold italic text-white border-b-2 border-b-[#c01818]">XM</div>
        <span className="ml-[6px] text-[12px] whitespace-nowrap">9063893: XMUK-Demo 2 - Conto dimostrativo (demo) - [EU50Cash,Weekly]</span>
        <div className="ml-auto flex items-center">
          <svg width="46" height="23" viewBox="0 0 46 23"><path d="M18 10.5h10" stroke="#fff" /></svg>
          <svg width="46" height="23" viewBox="0 0 46 23"><path d="M18.5 8.5h7v7h-7zM20.5 8V6.5h7v7H26" fill="none" stroke="#fff" /></svg>
          <svg width="46" height="23" viewBox="0 0 46 23"><path d="M18 6l10 10M28 6L18 16" stroke="#fff" /></svg>
        </div>
      </div>
      {/* menu bar */}
      <div className="h-[20px] flex items-center text-[12px] text-black shrink-0">
        <svg width="16" height="16" viewBox="0 0 16 16" className="ml-[4px]">
          <rect x="0.5" y="0.5" width="10" height="9" fill="#cfe0f3" stroke="#6d97c6" />
          <rect x="4.5" y="4.5" width="11" height="10" fill="#f2f7fc" stroke="#6d97c6" />
          <path d="M6 10l2-2 2 3 2-3 2 2" fill="none" stroke="#4a78ad" />
        </svg>
        <span className="ml-[8px]">File</span>
        <span className="ml-[17px]">Visualizza</span>
        <span className="ml-[14px]">Inserisci</span>
        <span className="ml-[15px]">Grafici</span>
        <span className="ml-[18px]">Strumenti</span>
        <span className="ml-[18px]">Finestra</span>
        <span className="ml-[16px]">Aiuto</span>
        <div className="ml-auto flex gap-[2px] pr-[2px]">
          <div className="w-[17px] h-[17px] border border-white flex items-center justify-center"><svg width="9" height="9" viewBox="0 0 9 9"><path d="M1 7h6" stroke="#777" strokeWidth="2" /></svg></div>
          <div className="w-[17px] h-[17px] border border-white flex items-center justify-center"><svg width="9" height="9" viewBox="0 0 9 9"><path d="M0.5 3.5h5v5h-5zM2.5 2V0.5h6v5H6" fill="none" stroke="#666" /></svg></div>
          <div className="w-[17px] h-[17px] border border-white flex items-center justify-center"><svg width="9" height="9" viewBox="0 0 9 9"><path d="M1 1l7 7M8 1L1 8" stroke="#666" strokeWidth="2" /></svg></div>
        </div>
      </div>
      <Toolbar />
      {/* chart client area */}
      <div className="relative h-[613px] shrink-0 bg-[#a6a6a6] overflow-hidden">
        <ChartDrawing />
        <Dialog />
      </div>
      <div className="h-[2px] bg-white shrink-0" />
      <Tabs />
      <Status />
    </div>
  );
}
